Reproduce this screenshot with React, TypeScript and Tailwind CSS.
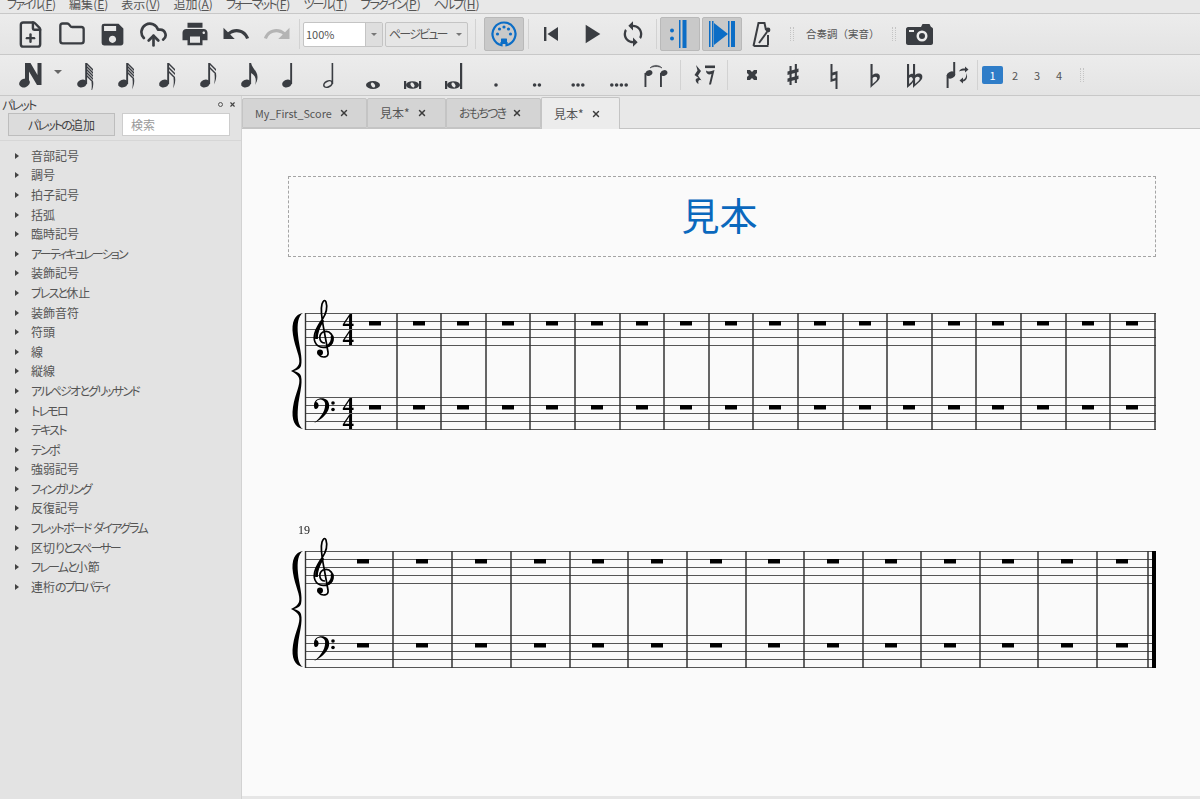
import type { ReactNode } from "react";
import { CloudUpload, FilePlus, Folder, X } from "lucide-react";
import { MdLoop, MdPlayArrow, MdPrint, MdRedo, MdSave, MdUndo } from "react-icons/md";

const INK = "#3a3d42";
const BLUE = "#0b6dc6";

const MENUS = [
  { label: "ファイル", key: "F" },
  { label: "編集", key: "E" },
  { label: "表示", key: "V" },
  { label: "追加", key: "A" },
  { label: "フォーマット", key: "F" },
  { label: "ツール", key: "T" },
  { label: "プラグイン", key: "P" },
  { label: "ヘルプ", key: "H" },
];
const PALETTES = [
  "音部記号", "調号", "拍子記号", "括弧", "臨時記号", "アーティキュレーション", "装飾記号", "ブレスと休止",
  "装飾音符", "符頭", "線", "縦線", "アルペジオとグリッサンド", "トレモロ", "テキスト", "テンポ", "強弱記号",
  "フィンガリング", "反復記号", "フレットボード ダイアグラム", "区切りとスペーサー", "フレームと小節", "連桁のプロパティ",
];
const TABS = [
  { label: "My_First_Score", width: "w-[125px]", size: "text-[10.8px]" },
  { label: "見本*", width: "w-[79px]", size: "text-[12px]" },
  { label: "おもちつき", width: "w-[95px]", size: "text-[12px]" },
  { label: "見本*", width: "w-[79px]", size: "text-[12px]", active: true },
];

// the app's UI font sets kana much narrower than kanji
const Jp = ({ text }: { text: string }) => (
  <>
    {text.split(/([\u3040-\u30ff]+)/).map((part, i) =>
      i % 2 === 1 ? (
        <span key={i} className="tracking-[-1.8px]">{part}</span>
      ) : (
        part
      ),
    )}
  </>
);

const Slot = ({ children }: { children: ReactNode }) => (
  <div className="flex h-full w-[41px] shrink-0 items-center justify-center">{children}</div>
);
const Sep = ({ className = "" }: { className?: string }) => (
  <div className={`h-[30px] w-px shrink-0 bg-[#d2d2d2] ${className}`} />
);
const Grip = ({ className = "" }: { className?: string }) => (
  <div className={`h-[14px] w-[4px] shrink-0 border-x border-dotted border-[#c4c4c4] ${className}`} />
);

const Glyph = ({ children, w = 30 }: { children: ReactNode; w?: number }) => (
  <svg width={w} height="30" viewBox={`0 0 ${w} 30`} fill={INK} stroke="none">
    {children}
  </svg>
);

const Head = () => <ellipse cx="11" cy="23.500" rx="5" ry="3.800" transform="rotate(-22 11 23.500)" />;

// flagged note, flags = number of flags
const Note = ({ flags }: { flags: number }) => {
  const step = flags > 3 ? 3 : 4;
  const tailTop = 3 + (flags - 1) * step + 6;
  return (
    <Glyph>
      <Head />
      <rect x="14.200" y="3" width="1.900" height="21" />
      {flags === 1 ? (
        <path d="M16 3c.8 5 6.500 8 6.500 14 0 3-1 5.500-2.500 8 1-3.500 1.200-6-.2-8.500-1-1.500-2.300-2.500-3.800-3.500z" />
      ) : (
        <>
          {Array.from({ length: flags }, (_, i) => (
            <path key={i} d={`M16 ${3 + i * step}l6 6v1.900l-6-6z`} />
          ))}
          <path d={`M22 ${tailTop}c.8 4-.2 8-2 11.500.8-3.500 1-7 .5-10.500z`} />
        </>
      )}
    </Glyph>
  );
};

const Quarter = () => (
  <Glyph>
    <Head />
    <rect x="14.200" y="3" width="1.900" height="21" />
  </Glyph>
);

const Half = () => (
  <Glyph>
    <ellipse cx="11" cy="24" rx="4.500" ry="2.800" transform="rotate(-28 11 24)" fill="none" stroke={INK} strokeWidth="1.600" />
    <rect x="14.600" y="3" width="1.600" height="21" />
  </Glyph>
);

const Whole = () => (
  <Glyph>
    <ellipse cx="15" cy="25" rx="7" ry="4" />
    <ellipse cx="15" cy="25" rx="1.800" ry="2.800" fill="#e8e8e8" transform="rotate(-35 15 25)" />
  </Glyph>
);

const Breve = ({ stem }: { stem?: boolean }) => (
  <Glyph>
    <ellipse cx="13.500" cy="25" rx="6.500" ry="3.800" />
    <ellipse cx="13.500" cy="25" rx="1.700" ry="2.600" fill="#e8e8e8" transform="rotate(-35 13.500 25)" />
    <rect x="5" y="21" width="2.200" height="8" />
    <rect x="20" y={stem ? 3 : 21} width="2.200" height={stem ? 26 : 8} />
  </Glyph>
);

const Dots = ({ n }: { n: number }) => (
  <Glyph>
    {Array.from({ length: n }, (_, i) => (
      <circle key={i} cx={15 - (n - 1) * 2.400 + i * 4.800} cy="25" r="1.800" />
    ))}
  </Glyph>
);

const NoteEntry = () => (
  <svg width="26" height="28" viewBox="0 0 26 28">
    <path d="M7 2h5.500l7 12V2h4v22h-4.500L11 10.500V21H7z" fill={INK} />
    <ellipse cx="6.500" cy="22" rx="5.500" ry="4.200" transform="rotate(-22 6.500 22)" fill={INK} />
  </svg>
);

const Tie = () => (
  <svg width="30" height="30" viewBox="0 0 30 30" fill={INK}>
    <path d="M9 8c3-3.500 9-3.500 12 0-3.500-2-8.500-2-12 0z" stroke={INK} strokeWidth=".6" />
    <ellipse cx="8" cy="13" rx="3.500" ry="2.800" transform="rotate(-24 8 13)" />
    <rect x="3.500" y="13" width="1.900" height="14" />
    <ellipse cx="23" cy="13" rx="3.500" ry="2.800" transform="rotate(-24 23 13)" />
    <rect x="19" y="13" width="1.900" height="14" />
  </svg>
);

const Rests = () => (
  <svg width="30" height="30" viewBox="0 0 30 30" fill={INK}>
    <path d="M7 5l5 6-3 4.500 3.500 5c-2-1-4-.500-3 3.500-3.500-2-4-6 0-6L5.500 15l3-4.500z" />
    <rect x="16" y="5.500" width="10" height="2.600" />
    <path d="M17 10.500c2 1.500 5 1 8.500-.500L22 24.500h-2l2.500-10.500c-2 .8-5.300.8-5.500-3.500z" />
  </svg>
);

const DoubleSharp = () => (
  <Glyph>
    <path d="M10 10h3l2 2 2-2h3v3l-2 2 2 2v3h-3l-2-2-2 2h-3v-3l2-2-2-2z" />
  </Glyph>
);
const Sharp = () => (
  <Glyph>
    <path d="M11.500 6h2.100v19h-2.100zM16.800 4h2.100v19h-2.100z" />
    <path d="M9.500 11.500l11-3v3.600l-11 3zM9.500 18.500l11-3v3.600l-11 3z" />
  </Glyph>
);
const Natural = () => (
  <Glyph>
    <path d="M11.500 4h2v8.500l5-1.500v18h-2v-8.500l-5 1.500zM13.500 15.500v3.500l3-.9v-3.500z" fillRule="evenodd" />
  </Glyph>
);
const Flat = () => (
  <Glyph>
    <path d="M10.500 4h2.100v11c4-3 8.500-1 7 3.500-1 2.800-5.500 5.500-9.100 9.500zM12.600 18v6c2.200-1.800 4.400-3.500 4.600-5.200.3-2.300-2.800-2.800-4.600-.8z" fillRule="evenodd" />
  </Glyph>
);
const DoubleFlat = () => (
  <Glyph>
    <path d="M6 4h2.100v11c1.300-1 2.700-1.300 3.900-1.200V4h2.100v11c4-3 8.500-1 7 3.500-1 2.800-5.500 5.500-9.100 9.500v-6c-1 2-2.800 3.500-6 6zM8.100 18v6c2-1.700 3.400-3 3.900-4.500-.3-2.500-2.200-3.200-3.900-1.500zM14.100 18v6c2.200-1.800 4.400-3.500 4.600-5.200.3-2.300-2.800-2.800-4.600-.8z" fillRule="evenodd" />
  </Glyph>
);
const FlipNote = () => (
  <svg width="30" height="30" viewBox="0 0 30 30" fill={INK}>
    <ellipse cx="9" cy="15" rx="4.200" ry="3.400" transform="rotate(-24 9 15)" />
    <rect x="4.600" y="15" width="2" height="13" />
    <rect x="11.200" y="2" width="2" height="13" />
    <path d="M17 11.500c1-2.500 3-3 6-3V6.500l3.500 3-3.500 3v-2c-2.500 0-4.500 0-6 1z" />
    <path d="M24.500 13c1.500 4.500 0 8-3.500 8.500v2l-3.500-3 3.500-3v2c2 0 3.500-2.500 3.500-6.500z" />
  </svg>
);

const Midi = () => (
  <svg width="26" height="26" viewBox="0 0 26 26" fill={BLUE}>
    <path d="M10.500 24.200A11.500 11.500 0 1 1 15.500 24.200V22h-5z" fill="none" stroke={BLUE} strokeWidth="2.200" />
    <circle cx="6.500" cy="13" r="1.600" />
    <circle cx="8.500" cy="8" r="1.600" />
    <circle cx="13" cy="6" r="1.600" />
    <circle cx="17.500" cy="8" r="1.600" />
    <circle cx="19.500" cy="13" r="1.600" />
    <rect x="10" y="17.500" width="6" height="4.500" rx=".5" />
  </svg>
);

const RewindIcon = () => (
  <svg width="18" height="18" viewBox="0 0 18 18" fill={INK}>
    <rect x="2" y="2" width="2.400" height="14" />
    <path d="M16 2v14L5.500 9z" />
  </svg>
);

const RepeatStart = () => (
  <svg width="24" height="32" viewBox="0 0 24 32" fill={BLUE}>
    <circle cx="4" cy="12.500" r="2" />
    <circle cx="4" cy="20.500" r="2" />
    <rect x="11" y="2" width="1.500" height="28" />
    <rect x="14.500" y="2" width="4" height="28" />
  </svg>
);

const PlayRepeat = () => (
  <svg width="26" height="32" viewBox="0 0 26 32" fill={BLUE}>
    <rect x="0" y="3" width="1.500" height="26" />
    <rect x="3" y="3" width="1.500" height="26" />
    <path d="M5 5v22l14-11z" />
    <rect x="19" y="3" width="1.500" height="26" />
    <rect x="22" y="3" width="4" height="26" />
  </svg>
);

const Metronome = () => (
  <svg width="20" height="26" viewBox="0 0 20 26" fill="none" stroke={INK} strokeWidth="2">
    <path d="M1.500 25L6.500 2h6l1.500 7M1.500 25h15" />
    <path d="M7 22l8-11" />
    <circle cx="16" cy="9" r="2.400" fill={INK} stroke="none" />
    <path d="M16 14v10" />
  </svg>
);

const Camera = () => (
  <svg width="27" height="23" viewBox="0 0 27 23">
    <path d="M2 4h13l1.500-3h7L25 4c1 0 2 1 2 2v14c0 1-1 2-2 2H2c-1 0-2-1-2-2V6c0-1 1-2 2-2z" fill={INK} />
    <circle cx="16" cy="13" r="5.500" fill="#ececec" />
    <circle cx="16" cy="13" r="3" fill={INK} />
    <rect x="3" y="7" width="5" height="2" fill="#ececec" />
  </svg>
);

const ToggleButton = ({ children, className = "" }: { children: ReactNode; className?: string }) => (
  <div className={`flex h-[34px] shrink-0 items-center justify-center rounded-[2px] border border-[#b9b9b9] bg-[#c9c9c9] ${className}`}>
    {children}
  </div>
);

const TopToolbar = () => (
  <div className="flex h-[41px] shrink-0 items-center border-b border-[#c8c8c8] bg-gradient-to-b from-[#ececec] to-[#e4e4e4] pl-[10px]">
    <Slot><FilePlus size={29} color={INK} strokeWidth={2} /></Slot>
    <Slot><Folder size={28} color={INK} strokeWidth={2} /></Slot>
    <Slot><MdSave size={29} color={INK} /></Slot>
    <Slot><CloudUpload size={29} color={INK} strokeWidth={2.200} /></Slot>
    <Slot><MdPrint size={30} color={INK} /></Slot>
    <Slot><MdUndo size={30} color={INK} /></Slot>
    <Slot><MdRedo size={30} color="#b4b4b4" /></Slot>
    <Sep className="ml-[2px]" />
    <div className="ml-[3px] flex h-[25px] w-[80px] shrink-0 rounded-[2px] border border-[#c4c4c4] bg-white">
      <span className="flex-1 pl-[2px] text-[11px] leading-[23px] text-[#555]">100%</span>
      <div className="flex w-[17px] items-center justify-center border-l border-[#c4c4c4] bg-[#dedede]">
        <div className="h-0 w-0 border-x-[3px] border-t-[3px] border-x-transparent border-t-[#777]" />
      </div>
    </div>
    <div className="ml-[2px] flex h-[25px] w-[83px] shrink-0 items-center justify-between rounded-[2px] border border-[#c4c4c4] bg-[#e6e6e6] pr-[5px] pl-[3px]">
      <span className="text-[12px] whitespace-nowrap text-[#555]"><Jp text="ページビュー" /></span>
      <div className="h-0 w-0 border-x-[3px] border-t-[3px] border-x-transparent border-t-[#777]" />
    </div>
    <Sep className="ml-[7px]" />
    <ToggleButton className="ml-[8px] w-[40px]"><Midi /></ToggleButton>
    <Sep className="ml-[4px]" />
    <div className="ml-[2px] flex h-full w-[120px] shrink-0">
      <div className="flex w-[40px] items-center justify-center"><RewindIcon /></div>
      <div className="flex w-[40px] items-center justify-center"><MdPlayArrow size={32} color={INK} /></div>
      <div className="flex w-[40px] items-center justify-center pl-[3px]"><MdLoop size={28} color={INK} /></div>
    </div>
    <Sep className="ml-[5px]" />
    <ToggleButton className="ml-[3px] w-[40px]"><RepeatStart /></ToggleButton>
    <ToggleButton className="ml-[2px] w-[40px]"><PlayRepeat /></ToggleButton>
    <div className="ml-[9px] flex w-[22px] shrink-0 justify-center"><Metronome /></div>
    <Grip className="ml-[17px]" />
    <span className="ml-[12px] w-[75px] shrink-0 text-[10.5px] whitespace-nowrap text-[#555] [font-feature-settings:normal]">合奏調（実音）</span>
    <Grip className="ml-[11px]" />
    <div className="ml-[10px] shrink-0"><Camera /></div>
  </div>
);

const NoteToolbar = () => (
  <div className="flex h-[41px] shrink-0 items-center border-b border-[#c8c8c8] bg-gradient-to-b from-[#ececec] to-[#e4e4e4] pl-[10px]">
    <Slot><NoteEntry /></Slot>
    <div className="flex w-[14px] shrink-0 justify-center pb-[6px]">
      <div className="h-0 w-0 border-x-[4px] border-t-[4px] border-x-transparent border-t-[#666]" />
    </div>
    {[5, 4, 3, 2, 1].map((flags) => (
      <Slot key={flags}><Note flags={flags} /></Slot>
    ))}
    <Slot><Quarter /></Slot>
    <Slot><Half /></Slot>
    <Slot><Whole /></Slot>
    <Slot><Breve /></Slot>
    <Slot><Breve stem /></Slot>
    {[1, 2, 3, 4].map((n) => (
      <Slot key={n}><Dots n={n} /></Slot>
    ))}
    <div className="flex w-[33px] shrink-0 justify-center"><Tie /></div>
    <Sep className="ml-[8px]" />
    <div className="flex w-[46px] shrink-0 justify-center"><Rests /></div>
    <Sep />
    <div className="ml-[4px] flex h-full w-[245px] shrink-0 items-center justify-between px-[5px]">
      <DoubleSharp />
      <Sharp />
      <Natural />
      <Flat />
      <DoubleFlat />
      <FlipNote />
    </div>
    <Sep />
    <div className="ml-[4px] flex h-[18px] w-[21px] shrink-0 items-center justify-center rounded-[2px] bg-[#2f7dc8] text-[11px] text-white">1</div>
    <div className="ml-px flex shrink-0">
      {["2", "3", "4"].map((n) => (
        <span key={n} className="w-[22px] text-center text-[11px] text-[#555]">{n}</span>
      ))}
    </div>
    <Grip className="ml-[10px]" />
  </div>
);

const Sidebar = () => (
  <aside className="flex w-[242px] shrink-0 flex-col border-r border-[#d2d2d2] bg-[#e3e3e3]">
    <div className="flex h-[17px] items-center justify-between pr-[5px] pl-[2px]">
      <span className="text-[12px] text-[#444]"><Jp text="パレット" /></span>
      <div className="flex items-center gap-[6px]">
        <div className="h-[5px] w-[5px] rounded-full border border-[#555]" />
        <X size={7} color="#444" strokeWidth={4} />
      </div>
    </div>
    <div className="flex h-[28px] items-start gap-[7px] border-b border-[#d6d6d6] pl-[8px]">
      <div className="flex h-[23px] w-[107px] items-center justify-center border border-[#bdbdbd] bg-[#dcdcdc] text-[12px] text-[#444]"><Jp text="パレットの追加" /></div>
      <div className="flex h-[23px] w-[108px] items-center border border-[#cdcdcd] bg-white pl-[8px] text-[12px] text-[#999]">検索</div>
    </div>
    <ul className="pt-[5px]">
      {PALETTES.map((name) => (
        <li key={name} className="flex h-[19.6px] items-center pl-[15px] text-[12px] whitespace-pre text-[#555]">
          <span className="h-0 w-0 border-y-[3px] border-l-[4px] border-y-transparent border-l-[#444]" />
          <span className="ml-[12px]"><Jp text={name} /></span>
        </li>
      ))}
    </ul>
  </aside>
);

const TabBar = () => (
  <div className="flex h-[33px] shrink-0 items-end border-b border-[#c4c4c4] bg-[#e8e8e8]">
    {TABS.map((tab, i) => (
      <div
        key={i}
        className={`flex shrink-0 items-center gap-[7px] rounded-t-[2px] border border-[#c4c4c4] pl-[12px] text-[#555] ${tab.width} ${tab.size} ${
          tab.active ? "-mb-px h-[32px] border-b-0 bg-[#ececec]" : "h-[30px] bg-[#d4d4d4]"
        }`}
      >
        <span><Jp text={tab.label} /></span>
        <X size={10} color="#3c3c3c" strokeWidth={3.500} />
      </div>
    ))}
  </div>
);

const STAFF_OFFSETS = [0, 8, 16, 24, 32];

const Brace = ({ dy }: { dy: number }) => (
  <path
    transform={`translate(0 ${dy})`}
    fill="#000"
    d="M303 313C295 314 291 322 293 335C295 348 301 358 299 364C298 367 295 369 291 371C295 373 298 375 299 378C301 384 295 394 293 407C291 420 295 428 303 429C298 426 297 418 298 407C299 396 303 384 301 376C300 373 297 372 294 371C297 370 300 369 301 366C303 358 299 346 298 335C297 324 298 316 303 313Z"
  />
);

const TrebleClef = ({ dy }: { dy: number }) => (
  <g transform={`translate(0 ${dy})`} fill="none" stroke="#000">
    <path strokeWidth="1.700" d="M325 343C319 343 318 335 323 332C330 329 335 337 332 343C328 349 318 349 315 342C312 335 317 327 322 320C326 314 328 308 326 302C325 299 323 301 322 304C320 311 322 320 324 330L328 352C329 358 322 358 319 355" />
    <path strokeWidth="2.800" d="M316.500 339C316 332 319 326 323 320M332 336C333 340 331 345 327 346" />
    <circle cx="320" cy="352.500" r="3" fill="#000" stroke="none" />
  </g>
);

const BassClef = ({ dy }: { dy: number }) => (
  <g transform={`translate(0 ${dy})`}>
    <path d="M314 405C314 399 322 396 327 400C332 405 329 416 314 423C322 417 326 409 325 403C324 399 318 398 316 402C319 402 320 408 316 409C314 409 314 407 314 405Z" fill="#000" />
    <circle cx="333" cy="403" r="1.800" fill="#000" />
    <circle cx="333" cy="409.500" r="1.800" fill="#000" />
  </g>
);

// one piano system, coordinates are page pixels
const System = ({
  top,
  bars,
  rests,
  timeSig,
  final,
}: {
  top: number;
  bars: number[];
  rests: number[];
  timeSig?: boolean;
  final?: boolean;
}) => {
  const lower = top + 84;
  const dy = top - 313;
  return (
    <g>
      <Brace dy={dy} />
      {[top, lower].map((y) =>
        STAFF_OFFSETS.map((o) => (
          <line key={y + o} x1="305" x2="1156" y1={y + o + 0.5} y2={y + o + 0.5} stroke="#555" strokeWidth="1" />
        )),
      )}
      <line x1="305.500" x2="305.500" y1={top} y2={lower + 33} stroke="#333" strokeWidth="1.400" />
      {bars.map((x) => (
        <line key={x} x1={x} x2={x} y1={top} y2={lower + 33} stroke="#333" strokeWidth="1.500" />
      ))}
      {final && <rect x="1152" y={top} width="4" height={lower + 33 - top} fill="#000" />}
      {rests.map((x) => (
        <g key={x} fill="#000">
          <rect x={x - 6} y={top + 8} width="12" height="4.500" />
          <rect x={x - 6} y={lower + 8} width="12" height="4.500" />
        </g>
      ))}
      <TrebleClef dy={dy} />
      <BassClef dy={dy} />
      {timeSig &&
        [top + 16, top + 32, lower + 16, lower + 32].map((y) => (
          <text key={y} x="342.500" y={y} fontFamily="'Liberation Serif', serif" fontWeight="700" fontSize="23">4</text>
        ))}
    </g>
  );
};

const FIRST_BARS = Array.from({ length: 18 }, (_, i) => Math.round(396.500 + i * 44.600));
const FIRST_RESTS = [375, ...Array.from({ length: 17 }, (_, i) => Math.round(418.500 + i * 44.600))];
const SECOND_BARS = [393, 452, 511, 570, 628, 687, 746, 804, 863, 921, 980, 1038, 1097, 1148];
const SECOND_RESTS = [363, 422, 481, 540, 598, 657, 716, 774, 833, 891, 950, 1008, 1067, 1122];

const ScorePage = () => (
  <div className="flex-1 bg-[#fafafa] pt-[47px]">
    <div className="ml-[46px] flex h-[81px] w-[868px] items-center justify-center border border-dashed border-[#a4a4a4] pr-[5px] pb-[6px] text-[38px] leading-none text-[#0a68bd]">
      見本
    </div>
    <svg width="958" height="530" viewBox="242 257 958 530" className="block will-change-transform">
      <System top={313} bars={FIRST_BARS} rests={FIRST_RESTS} timeSig />
      <text x="298" y="534" fontFamily="'Liberation Serif', serif" fontSize="12" fill="#222">19</text>
      <System top={551} bars={SECOND_BARS} rests={SECOND_RESTS} final />
    </svg>
  </div>
);

export default function App() {
  return (
    <div className="flex h-[799px] w-[1200px] flex-col overflow-hidden bg-[#e6e6e6] font-['Noto_Sans_CJK_JP','Noto_Sans',sans-serif] [font-feature-settings:'palt']">
      <nav className="flex h-[14px] shrink-0 items-end gap-[13px] overflow-hidden border-b border-[#c8c8c8] bg-[#e8e8e8] pl-[7px]">
        {MENUS.map((menu, i) => (
          <span key={i} className="text-[12px] leading-[18px] whitespace-nowrap text-[#555]">
            <Jp text={menu.label} />(<u>{menu.key}</u>)
          </span>
        ))}
      </nav>
      <TopToolbar />
      <NoteToolbar />
      <div className="flex min-h-0 flex-1">
        <Sidebar />
        <main className="flex min-w-0 flex-1 flex-col pb-[3px]">
          <TabBar />
          <ScorePage />
        </main>
      </div>
    </div>
  );
}
